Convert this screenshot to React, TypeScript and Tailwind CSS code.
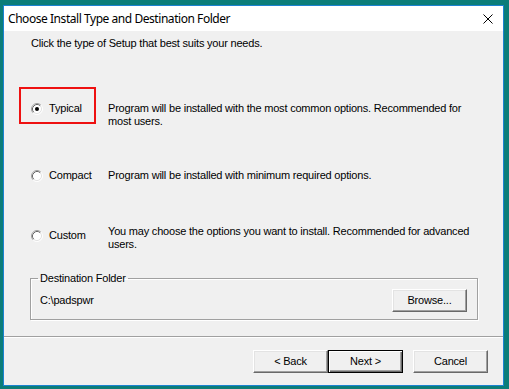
import React from "react";

function Radio({ checked }: { checked?: boolean }) {
  return (
    <svg width="12" height="12" viewBox="0 0 12 12" className="shrink-0">
      <circle cx="6" cy="6" r="5" fill="#ffffff" />
      <path d="M2.11 9.89 A5.5 5.5 0 0 1 9.89 2.11" fill="none" stroke="#a0a0a0" strokeWidth="1" />
      <path d="M9.89 2.11 A5.5 5.5 0 0 1 2.11 9.89" fill="none" stroke="#ffffff" strokeWidth="1" />
      <path d="M2.82 9.18 A4.5 4.5 0 0 1 9.18 2.82" fill="none" stroke="#696969" strokeWidth="1" />
      <path d="M9.18 2.82 A4.5 4.5 0 0 1 2.82 9.18" fill="none" stroke="#e3e3e3" strokeWidth="1" />
      {checked && <circle cx="6" cy="6" r="2" fill="#000000" />}
    </svg>
  );
}

function Button({ label, primary }: { label: string; primary?: boolean }) {
  return (
    <div
      className={
        primary
          ? "w-[75px] h-[23px] flex items-center justify-center bg-[#f0f0f0] border border-black shadow-[inset_1px_1px_0_#ffffff,inset_-1px_-1px_0_#696969,inset_-2px_-2px_0_#a0a0a0]"
          : "w-[75px] h-[23px] flex items-center justify-center bg-[#f0f0f0] border border-t-white border-l-white border-r-[#696969] border-b-[#696969] shadow-[inset_-1px_-1px_0_#a0a0a0,inset_1px_1px_0_#e3e3e3]"
      }
    >
      {label}
    </div>
  );
}

function Option({
  label,
  checked,
  focused,
  lines,
  rowClass,
  descClass,
}: {
  label: string;
  checked?: boolean;
  focused?: boolean;
  lines: string[];
  rowClass: string;
  descClass: string;
}) {
  return (
    <div className={"flex items-start pl-[15px] " + rowClass}>
      <div
        className={
          "w-[77px] h-[37px] shrink-0 border-2 pl-[10px] pt-[13px] flex items-start " +
          (focused ? "border-[#ee1111]" : "border-transparent")
        }
      >
        <div className="flex items-center gap-[6px] h-[13px]">
          <Radio checked={checked} />
          <span>{label}</span>
        </div>
      </div>
      <div className={"ml-[12px] whitespace-nowrap " + descClass}>
        {lines.map((l) => (
          <div key={l}>{l}</div>
        ))}
      </div>
    </div>
  );
}

export default function App() {
  return (
    <div className="w-[509px] h-[389px] bg-[#0b7d79] pl-[3px] pt-[5px] overflow-hidden">
      <div className="w-[501px] h-[381px] border border-[#1b82d1] flex flex-col">
        {/* title bar */}
        <div className="h-[25px] shrink-0 bg-white flex items-center justify-between pl-[4px] pr-[10px]">
          <span className="text-[12px] tracking-[-0.45px] text-black font-['Noto_Sans',sans-serif] leading-none">
            Choose Install Type and Destination Folder
          </span>
          <svg width="10" height="10" viewBox="0 0 10 10">
            <path d="M0.5 0.5 L9.5 9.5 M9.5 0.5 L0.5 9.5" stroke="#000000" strokeWidth="1" />
          </svg>
        </div>

        {/* body */}
        <div className="flex-1 bg-[#f0f0f0] flex flex-col text-[11px] leading-[13px] tracking-[-0.2px] text-black font-['Liberation_Sans',Arial,sans-serif]">
          <p className="pl-[27px] pt-[6px]">Click the type of Setup that best suits your needs.</p>

          <Option
            label="Typical"
            checked
            focused
            rowClass="mt-[37px]"
            descClass="mt-[15px]"
            lines={[
              "Program will be installed with the most common options. Recommended for",
              "most users.",
            ]}
          />
          <Option
            label="Compact"
            rowClass="mt-[26px]"
            descClass="mt-[15px]"
            lines={["Program will be installed with minimum required options."]}
          />
          <Option
            label="Custom"
            rowClass="mt-[23px]"
            descClass="mt-[11px]"
            lines={[
              "You may choose the options you want to install. Recommended for advanced",
              "users.",
            ]}
          />

          <fieldset className="mt-[21px] ml-[26px] w-[448px] border border-[#a0a0a0] pl-[7px] pr-[10px] pb-[7px] shadow-[inset_1px_1px_0_#ffffff,1px_1px_0_#ffffff]">
            <legend className="px-[2px] leading-[12px]">Destination Folder</legend>
            <div className="flex items-center justify-between pl-[2px] mt-[5px]">
              <span>C:\padspwr</span>
              <Button label="Browse..." />
            </div>
          </fieldset>

          <div className="mt-[16px] h-[2px] border-t border-t-[#a0a0a0] border-b border-b-white" />

          <div className="mt-[12px] flex justify-end pr-[15px]">
            <Button label="< Back" />
            <Button label="Next >" primary />
            <div className="w-[10px]" />
            <Button label="Cancel" />
          </div>
        </div>
      </div>
    </div>
  );
}
